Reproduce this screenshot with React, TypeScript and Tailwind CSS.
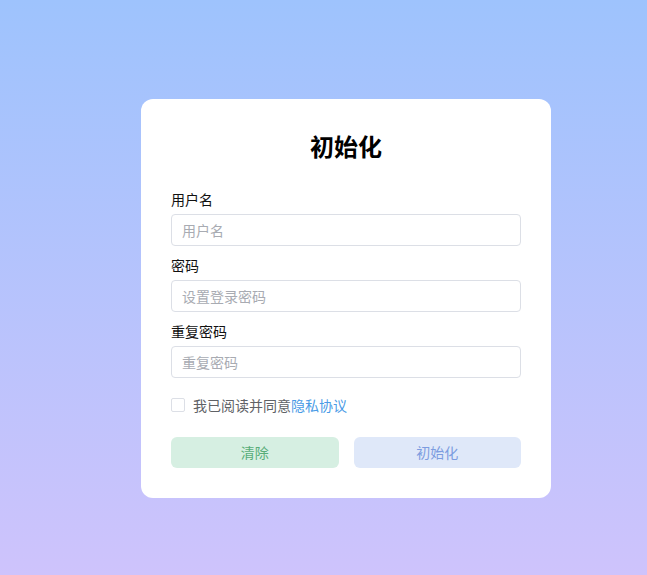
import React from "react";

const font = { fontFamily: '"Noto Sans CJK SC", "Noto Sans", sans-serif' };

function Field({ label, placeholder, type = "text" }: { label: string; placeholder: string; type?: string }) {
  return (
    <div className="flex flex-col">
      <label className="h-[20px] text-[14px] leading-[20px] text-[#111]">{label}</label>
      <input
        type={type}
        placeholder={placeholder}
        className="mt-[5px] h-[32px] w-full rounded-[4px] border border-[#dcdfe6] bg-white px-[10px] text-[14px] text-[#333] outline-none placeholder:text-[#a8abb2]"
      />
    </div>
  );
}

export default function App() {
  return (
    <div
      className="h-[575px] w-full bg-[linear-gradient(to_bottom,#9ec3fd,#cec3fc)] pl-[141px] pt-[99px]"
      style={font}
    >
      <div className="flex w-[410px] flex-col rounded-[12px] bg-white px-[30px] pb-[30px] pt-[31px]">
        <h1 className="h-[32px] text-center text-[24px] font-bold leading-[32px] text-black">初始化</h1>
        <div className="mt-[27px] flex flex-col gap-[9px]">
          <Field label="用户名" placeholder="用户名" />
          <Field label="密码" placeholder="设置登录密码" type="password" />
          <Field label="重复密码" placeholder="重复密码" type="password" />
        </div>
        <div className="mt-[16px] flex h-[22px] items-center">
          <span className="h-[14px] w-[14px] rounded-[2px] border border-[#dcdfe6] bg-white" />
          <span className="ml-[8px] text-[14px] leading-[22px] text-[#606266]">
            我已阅读并同意<span className="text-[#4a9be6]">隐私协议</span>
          </span>
        </div>
        <div className="mt-[21px] flex gap-[15px]">
          <button className="h-[31px] flex-1 rounded-[6px] bg-[#d6efe2] text-[14px] text-[#57ad78]">清除</button>
          <button className="h-[31px] flex-1 rounded-[6px] bg-[#dfe8f9] text-[14px] text-[#7c9ce0]">初始化</button>
        </div>
      </div>
    </div>
  );
}
